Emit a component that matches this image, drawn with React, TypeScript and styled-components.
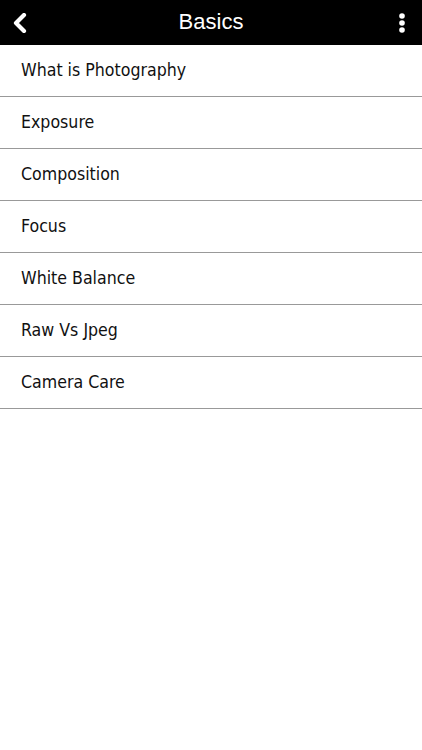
import styled, { createGlobalStyle } from "styled-components";

const items = [
  "What is Photography",
  "Exposure",
  "Composition",
  "Focus",
  "White Balance",
  "Raw Vs Jpeg",
  "Camera Care",
];

const GlobalStyle = createGlobalStyle`
  html, body {
    margin: 0;
    padding: 0;
    background: #fff;
  }
`;

const App = () => {
  return (
    <Page>
      <GlobalStyle />
      <Header>
        <IconButton aria-label="Back">
          <svg width="18" height="20" viewBox="0 0 18 20">
            <path d="M13 2 L5 10 L13 18" fill="none" stroke="#fff" strokeWidth="4.2" strokeLinecap="round" strokeLinejoin="round" />
          </svg>
        </IconButton>
        <Title>Basics</Title>
        <IconButton aria-label="More">
          <svg width="8" height="22" viewBox="0 0 8 22">
            <circle cx="4" cy="4" r="2.8" fill="#fff" />
            <circle cx="4" cy="11" r="2.8" fill="#fff" />
            <circle cx="4" cy="18" r="2.8" fill="#fff" />
          </svg>
        </IconButton>
      </Header>

      <List>
        {items.map(item => (
          <Row key={item}>{item}</Row>
        ))}
      </List>
    </Page>
  );
};

const Page = styled.div`
  width: 422px;
  min-height: 750px;
  background: #fff;
`;

const Header = styled.header`
  height: 45px;
  background: #000;
  display: flex;
  align-items: center;
  justify-content: space-between;
  padding: 0 10px;
  box-sizing: border-box;
`;

const IconButton = styled.button`
  background: none;
  border: 0;
  padding: 0;
  width: 20px;
  height: 30px;
  display: flex;
  align-items: center;
  justify-content: center;
  cursor: pointer;
`;

const Title = styled.h1`
  margin: 0 0 2px;
  color: #fff;
  font-family: "Liberation Sans", Arial, sans-serif;
  font-weight: normal;
  font-size: 22px;
`;

const List = styled.ul`
  list-style: none;
  margin: 0;
  padding: 0;
`;

const Row = styled.li`
  height: 51px;
  box-sizing: content-box;
  display: flex;
  align-items: center;
  padding-left: 21px;
  border-bottom: 1px solid #999;
  font-family: "DejaVu Sans Condensed", "DejaVu Sans", Verdana, sans-serif;
  font-stretch: condensed;
  font-size: 17.6px;
  line-height: 1;
  color: #111;

  & > span {
    margin-bottom: 2px;
  }
`;

export default App;
